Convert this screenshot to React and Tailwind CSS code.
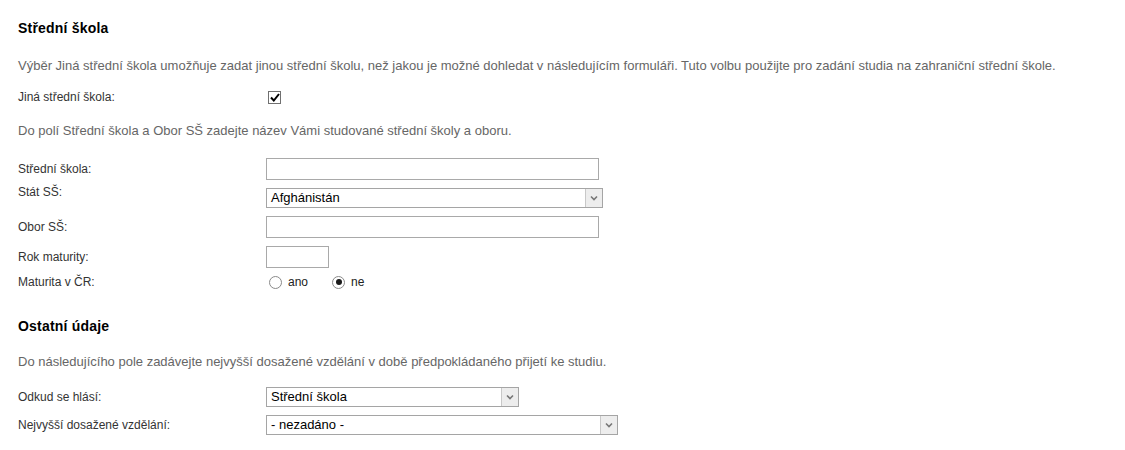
import React from "react";

function Select({ value, width }) {
  return (
    <div className={`flex h-5 border border-[#a5a5a5] bg-white ${width}`}>
      <span className="flex-1 pl-1 leading-[18px] text-[13px] text-black">{value}</span>
      <span className="flex w-[17px] items-center justify-center border-l border-[#c8c8c8] bg-[#ededed]">
        <svg width="8" height="6" viewBox="0 0 8 6">
          <path d="M1 1.5 L4 4.5 L7 1.5" fill="none" stroke="#777" strokeWidth="1.6" />
        </svg>
      </span>
    </div>
  );
}

function TextInput({ width }) {
  return <div className={`h-[22px] border border-[#a9a9a9] bg-white ${width}`}></div>;
}

function Radio({ checked, label }) {
  return (
    <span className="flex items-center">
      <span className="flex h-[13px] w-[13px] items-center justify-center rounded-full border border-[#8a8a8a] bg-white">
        {checked && <span className="h-[6px] w-[6px] rounded-full bg-[#1a1a1a]"></span>}
      </span>
      <span className="ml-[6px] text-[#222]">{label}</span>
    </span>
  );
}

export default function App() {
  return (
    <div className="h-[450px] w-[1125px] bg-white pl-[18px] pt-[18px] font-['Liberation_Sans',Arial,sans-serif] text-[12px] text-[#333]">
      <div className="flex flex-col">
        <h2 className="h-5 text-[14px] font-bold leading-5 tracking-[0.2px] text-black">Střední škola</h2>
        <p className="mt-5 h-4 text-[13px] leading-4 text-[#666]">
          Výběr Jiná střední škola umožňuje zadat jinou střední školu, než jakou je možné dohledat v následujícím formuláři. Tuto volbu použijte pro zadání studia na zahraniční střední škole.
        </p>
        <div className="mt-[15px] flex h-4 items-center">
          <span className="w-[248px] leading-4">Jiná střední škola:</span>
          <span className="ml-[2px] flex h-[13px] w-[13px] items-center justify-center border border-[#707070] bg-white">
            <svg width="10" height="9" viewBox="0 0 10 9">
              <path d="M1 4.5 L3.8 7.5 L9 1" fill="none" stroke="#000" strokeWidth="2" />
            </svg>
          </span>
        </div>
        <p className="mt-[18px] h-4 text-[13px] leading-4 text-[#666]">
          Do polí Střední škola a Obor SŠ zadejte název Vámi studované střední školy a oboru.
        </p>

        <div className="mt-[19px] flex h-[22px] items-center">
          <span className="w-[248px] leading-4">Střední škola:</span>
          <TextInput width="w-[333px]" />
        </div>
        <div className="mt-2 flex h-5 items-start">
          <span className="w-[248px] leading-[8px]">Stát SŠ:</span>
          <Select value="Afghánistán" width="w-[337px]" />
        </div>
        <div className="mt-2 flex h-[22px] items-center">
          <span className="w-[248px] leading-4">Obor SŠ:</span>
          <TextInput width="w-[333px]" />
        </div>
        <div className="mt-2 flex h-[22px] items-center">
          <span className="w-[248px] leading-4">Rok maturity:</span>
          <TextInput width="w-[63px]" />
        </div>
        <div className="mt-[6px] flex h-4 items-center">
          <span className="w-[248px] leading-4">Maturita v ČR:</span>
          <div className="ml-[3px] flex gap-[24px]">
            <Radio label="ano" />
            <Radio checked label="ne" />
          </div>
        </div>

        <h2 className="mt-[26px] h-5 text-[14px] font-bold leading-5 tracking-[0.2px] text-black">Ostatní údaje</h2>
        <p className="mt-[18px] h-4 text-[13px] leading-4 text-[#666]">
          Do následujícího pole zadávejte nejvyšší dosažené vzdělání v době předpokládaného přijetí ke studiu.
        </p>
        <div className="mt-[17px] flex h-5 items-center">
          <span className="w-[248px] leading-4">Odkud se hlásí:</span>
          <Select value="Střední škola" width="w-[253px]" />
        </div>
        <div className="mt-2 flex h-5 items-center">
          <span className="w-[248px] leading-4">Nejvyšší dosažené vzdělání:</span>
          <Select value="- nezadáno -" width="w-[352px]" />
        </div>
      </div>
    </div>
  );
}
